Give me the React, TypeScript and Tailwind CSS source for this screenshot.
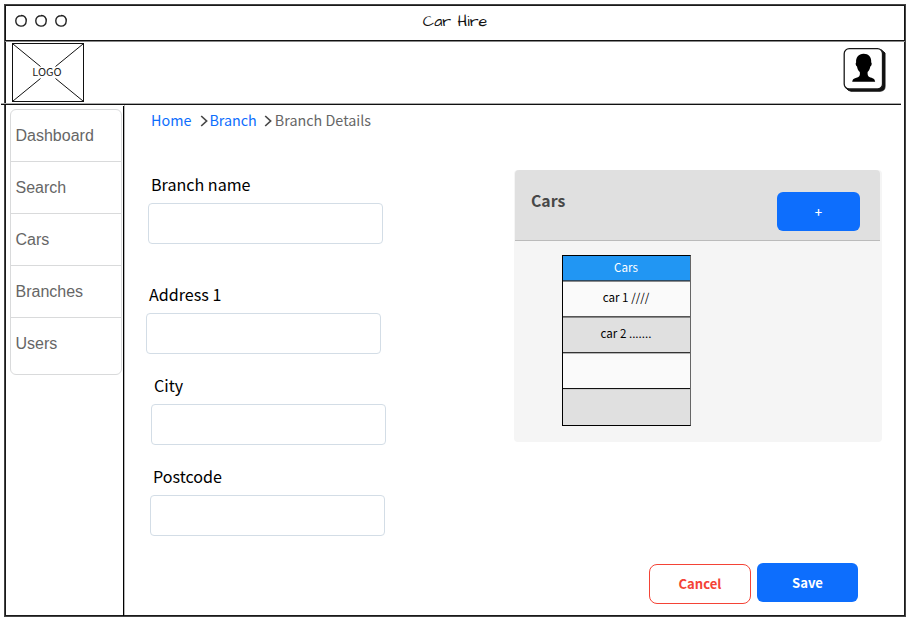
import React from "react";

const sans = "font-['Noto_Sans_CJK_SC','Noto_Sans',sans-serif]";

const navItems = ["Dashboard", "Search", "Cars", "Branches", "Users"];

const fields = [
  { label: "Branch name", box: "ml-[23px] mt-10" },
  { label: "Address 1", box: "ml-[21px] mt-[38px]" },
  { label: "City", box: "ml-[26px] mt-[19px]" },
  { label: "Postcode", box: "ml-[25px] mt-[19px]" },
];

const rows = [
  { text: "car 1 ////", style: "h-9 bg-[#fafafa] border-[#2c4a63] shadow-[inset_0_1px_0_#8a8a8a]" },
  { text: "car 2 .......", style: "h-9 bg-[#e0e0e0] border-[#555] shadow-[inset_0_1px_0_#888]" },
  { text: "", style: "h-9 bg-[#fafafa] border-[#333] shadow-[inset_0_1px_0_#b5b5b5]" },
  { text: "", style: "h-[37px] bg-[#e0e0e0] border-[#111] shadow-[inset_0_1px_0_#ccc]" },
];

function TitleBar() {
  return (
    <div className="relative flex h-[35px] shrink-0 items-center justify-center border-x border-b border-[#111] shadow-[0_1px_0_#888]">
      <svg className="absolute left-[7px] top-[6px]" width="56" height="18" viewBox="0 0 56 18" fill="none" stroke="#222" strokeWidth="1.4">
        <path d="M8 3.6C11.4 3.3 13.4 6 13.2 9C13 12.2 10.8 14.2 7.8 14.1C4.7 14 2.7 11.7 2.8 8.7C2.9 5.8 5 3.6 8.7 3.8" />
        <path d="M28 3.6C31.4 3.3 33.4 6 33.2 9C33 12.2 30.8 14.2 27.8 14.1C24.7 14 22.7 11.7 22.8 8.7C22.9 5.8 25 3.6 28.7 3.8" />
        <path d="M48 3.6C51.4 3.3 53.4 6 53.2 9C53 12.2 50.8 14.2 47.8 14.1C44.7 14 42.7 11.7 42.8 8.7C42.9 5.8 45 3.6 48.7 3.8" />
      </svg>
      <span className="-mt-[5px] font-['Architects_Daughter','Comic_Neue','Lato',cursive] text-base leading-5 text-[#111]">Car Hire</span>
    </div>
  );
}

function Avatar() {
  return (
    <svg className="mr-[17px] mt-[5px]" width="45" height="46" viewBox="0 0 45 46">
      <path d="M7 3H39.5L43 6V39.5Q43 44 38 44.2H9Q6 44 4 41Z" fill="#111" stroke="#111" strokeWidth="1" strokeLinejoin="round" />
      <rect x="2.2" y="1.7" width="38.3" height="40.3" rx="5" fill="#fff" stroke="#181818" strokeWidth="1.3" />
      <path d="M21.5 6.8C26.3 6.7 29.7 10 29.2 15.4C30.2 15.8 29.6 19 28.3 19.5C27.9 22 27 23.8 25.6 25C25.4 28 25.8 29.8 28.5 30.6C31.8 31.7 32.5 31.8 33.2 34.8H10.2C10.7 32.2 11.6 31.6 15 30.5C17.9 29.7 18.1 28.1 17.8 25C16.3 23.8 15.4 22 15 19.5C13.8 19 13.2 15.9 14.1 15.4C13.7 10.4 16.6 6.9 21.5 6.8Z" fill="#000" />
    </svg>
  );
}

function Header() {
  return (
    <header className="flex h-[61px] shrink-0 items-start justify-between">
      <div className="relative ml-[6px] mt-px flex h-[59px] w-[72px] items-center justify-center">
        <svg className="absolute inset-0" width="72" height="59" viewBox="0 0 72 59" fill="none" stroke="#111" strokeWidth="1">
          <rect x="0.5" y="0.5" width="71" height="58" />
          <path d="M1 1L28.5 23.5M71 1L43.5 23.5M1 58L28.5 35.5M71 58L43.5 35.5" />
        </svg>
        <span className={`relative -ml-[2px] -mt-[3px] text-[10.9px] leading-4 text-[#222] ${sans}`}>LOGO</span>
      </div>
      <Avatar />
    </header>
  );
}

function Chevron({ className }: { className: string }) {
  return (
    <svg className={className} width="8" height="12" viewBox="0 0 8 12" fill="none" stroke="#484848" strokeWidth="1.7">
      <path d="M1.2 1L6.6 6L1.2 11" />
    </svg>
  );
}

function Sidebar() {
  return (
    <div className="flex w-[119px] shrink-0 items-start border-r border-r-[#b5b5b5]">
      <nav className="ml-1 mt-1 w-[112px] rounded-md border border-[#d9dadb] pb-1 font-['Liberation_Sans',Arial,sans-serif] text-base text-[#666]">
        {navItems.map((item, i) => (
          <div key={item} className={`flex h-[52px] items-center pl-[4.5px] ${i < navItems.length - 1 ? "border-b border-[#d9dadb]" : ""}`}>
            {item}
          </div>
        ))}
      </nav>
      <div className="ml-px mt-px h-[510px] w-px bg-black" />
    </div>
  );
}

function CarsCard() {
  return (
    <section className="mr-[22px] mt-[65px] h-[272px] w-[368px] rounded bg-[#f5f5f5]">
      <div className="ml-px flex h-[71px] w-[365px] items-start justify-between rounded-t border-b border-[#bbb] bg-[#e0e0e0]">
        <h2 className="ml-4 mt-[17px] text-[15.8px] font-bold leading-7 text-[#484848]">Cars</h2>
        <button className="mr-5 mt-[22px] h-[39px] w-[83px] rounded-md bg-[#0d6efd] text-[13px] font-medium text-white">+</button>
      </div>
      <div className="ml-12 mt-[14px] w-[129px] border border-black border-r-[#666] text-center text-[11.6px] text-black">
        <div className="flex h-6 items-center justify-center bg-[#2196f3] pr-px text-white">Cars</div>
        {rows.map((row, i) => (
          <div key={i} className={`flex items-center justify-center border-t pr-px ${row.style}`}>
            <span className="-mt-px">{row.text}</span>
          </div>
        ))}
      </div>
    </section>
  );
}

export default function App() {
  return (
    <div className="h-[623px] w-[917px] overflow-hidden bg-white pl-1 pt-1">
      <div className="h-[613px] w-[902px] border border-[#444]">
        <div className="flex h-full flex-col border border-[#1a1a1a]">
          <div className="-mx-px -mt-px mb-px flex flex-col border-t border-[#1a1a1a]">
            <TitleBar />
          </div>
          <Header />
          <div className="-ml-[5px] h-[2px] w-[900px] shrink-0 border-b border-t border-b-[#111] border-t-[#aaa]" />
          <div className="flex min-h-0 flex-1">
            <Sidebar />
            <main className={`flex min-w-0 flex-1 justify-between ${sans}`}>
              <div>
                <div className="ml-[26px] mt-[3px] flex h-6 items-center text-[14.35px] leading-6">
                  <a className="text-[#0d6efd]">Home</a>
                  <Chevron className="ml-[9px] mt-px" />
                  <a className="ml-px text-[#0d6efd]">Branch</a>
                  <Chevron className="ml-[7px] mt-px" />
                  <span className="ml-[3px] text-[#666]">Branch Details</span>
                </div>
                {fields.map((f) => (
                  <div key={f.label} className={f.box}>
                    <label className="block pl-[3px] text-[16.1px] leading-6 text-black">{f.label}</label>
                    <input className="mt-[7px] block h-[41px] w-[235px] rounded border border-[#d3dde6] bg-white" />
                  </div>
                ))}
              </div>
              <div className="flex flex-col items-end">
                <CarsCard />
                <div className="mr-[46px] mt-[121px] flex items-start gap-[6px] text-[13.1px] font-bold">
                  <button className="mt-px h-10 w-[102px] rounded-lg border border-[#f44336] text-[#f44336]">Cancel</button>
                  <button className="h-[39px] w-[101px] rounded-md bg-[#0d6efd] text-white">Save</button>
                </div>
              </div>
            </main>
          </div>
        </div>
      </div>
    </div>
  );
}
